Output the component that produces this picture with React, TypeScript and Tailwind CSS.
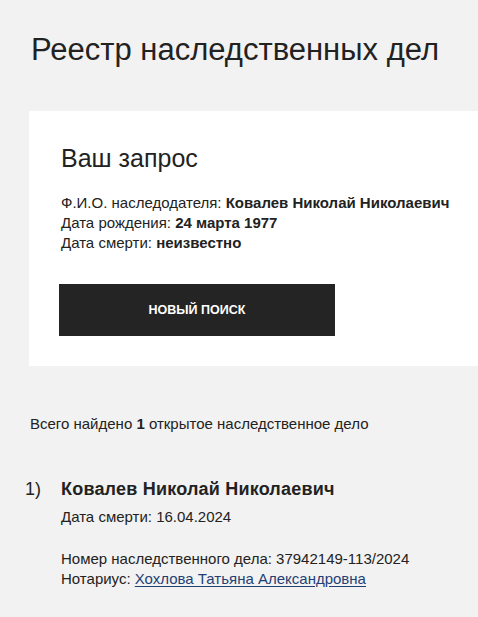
export default function App() {
  return (
    <div
      className="min-h-[617px] bg-[#f2f2f2] text-[#222] overflow-hidden"
      style={{ fontFamily: '"Liberation Sans", Arial, sans-serif' }}
    >
      <h1 className="pl-[31px] pt-[30px] text-[31px] leading-[40px] font-normal">
        Реестр наследственных дел
      </h1>

      {/* Request card */}
      <section className="mt-[41px] ml-[29px] bg-white pl-[32px] pt-[33px] pb-[29px] h-[255px]">
        <h2 className="text-[25px] leading-[28px] font-normal">Ваш запрос</h2>
        <div className="mt-[21px] text-[15px] leading-[20px]">
          <p>
            Ф.И.О. наследодателя: <b>Ковалев Николай Николаевич</b>
          </p>
          <p>
            Дата рождения: <b>24 марта 1977</b>
          </p>
          <p>
            Дата смерти: <b>неизвестно</b>
          </p>
        </div>
        <button className="mt-[31px] -ml-[2px] w-[276px] h-[52px] bg-[#242424] text-white text-[12.5px] font-bold uppercase">
          Новый поиск
        </button>
      </section>

      <p className="mt-[48px] pl-[30px] text-[15px] leading-[20px]">
        Всего найдено <b>1</b> открытое наследственное дело
      </p>

      <div className="mt-[44px] flex">
        <span className="w-[61px] pl-[25px] text-[18px] leading-[22px]">1)</span>
        <div>
          <h3 className="text-[18px] leading-[22px] font-bold tracking-[0.2px]">Ковалев Николай Николаевич</h3>
          <p className="mt-[7px] text-[15px] leading-[20px]">Дата смерти: 16.04.2024</p>
          <div className="mt-[22px] text-[15px] leading-[20px]">
            <p>Номер наследственного дела: 37942149-113/2024</p>
            <p>
              Нотариус:{" "}
              <a href="#" className="text-[#1f3f75] underline underline-offset-2">
                Хохлова Татьяна Александровна
              </a>
            </p>
          </div>
        </div>
      </div>
    </div>
  );
}
